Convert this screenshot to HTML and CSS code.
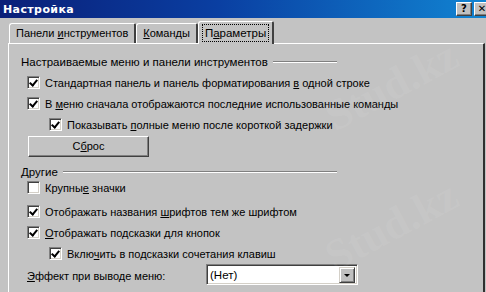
FILE: index.html
```html
<!DOCTYPE html>
<html lang="ru">
<head>
    <meta charset="UTF-8">
    <title>Настройка</title>
    <link rel="stylesheet" href="styles.css">
</head>
<body>
    <div class="dialog">
        <div class="titlebar">
            <span class="title">Настройка</span>
            <div class="caption-buttons">
                <span class="cap-btn">?</span>
                <span class="cap-btn">✕</span>
            </div>
        </div>

        <div class="tabs">
            <span class="tab">Панели <u>и</u>нструментов</span>
            <span class="tab"><u>К</u>оманды</span>
            <span class="tab active"><span class="focus">П<u>а</u>раметры</span></span>
        </div>

        <div class="panel">
            <div class="group-title"><span>Настраиваемые меню и панели инструментов</span><span class="rule"></span></div>

            <label class="check"><span class="box on"></span><span>Стандартная панель и панель форматирования <u>в</u> одной строке</span></label>
            <label class="check"><span class="box on"></span><span>В <u>м</u>еню сначала отображаются последние использованные команды</span></label>
            <label class="check sub"><span class="box on"></span><span>Показывать <u>п</u>олные меню после короткой задержки</span></label>

            <div class="btn-row"><span class="btn">С<u>б</u>рос</span></div>

            <div class="group-title second"><span>Другие</span><span class="rule"></span></div>

            <label class="check first"><span class="box"></span><span>Крупны<u>е</u> значки</span></label>
            <label class="check"><span class="box on"></span><span>Отображать названия <u>ш</u>рифтов тем же шрифтом</span></label>
            <label class="check"><span class="box on"></span><span><u>О</u>тображать подсказки для кнопок</span></label>
            <label class="check sub"><span class="box on"></span><span>Вклю<u>ч</u>ить в подсказки сочетания клавиш</span></label>

            <div class="effect-row">
                <span class="effect-label"><u>Э</u>ффект при выводе меню:</span>
                <div class="select">
                    <span class="select-value">(Нет)</span>
                    <span class="select-arrow"></span>
                </div>
            </div>
        </div>

        <span class="watermark wm-mid">Stud.kz</span>
        <span class="watermark wm-low">Stud.kz</span>
    </div>
</body>
</html>
```

FILE: styles.css
```css
* {
    margin: 0;
    padding: 0;
    box-sizing: border-box;
}
body {
    width: 486px;
    height: 292px;
    overflow: hidden;
    background: #c0c0c0;
    font-family: 'Liberation Sans', Arial, sans-serif;
    font-size: 11px;
    color: #000;
}
u {
    text-decoration: underline;
    text-underline-offset: 1px;
}
.dialog {
    position: relative;
    height: 292px;
    overflow: hidden;
    background: #c3c3c3;
}

/* Title bar */
.titlebar {
    height: 18px;
    display: flex;
    justify-content: space-between;
    align-items: center;
    padding-left: 3px;
    background: linear-gradient(to right, #0a1f78 0%, #0a3fa2 45%, #1184d2 100%);
}
.title {
    color: #fff;
    font-family: 'DejaVu Sans', sans-serif;
    font-weight: bold;
    font-size: 11px;
    letter-spacing: 0.4px;
}
.caption-buttons {
    display: flex;
    gap: 2px;
    margin-right: -4px;
}
.cap-btn {
    width: 16px;
    height: 14px;
    background: #c0c0c0;
    border: 1px solid;
    border-color: #fff #404040 #404040 #fff;
    box-shadow: inset -1px -1px 0 #808080;
    font-family: 'DejaVu Sans', sans-serif;
    font-weight: bold;
    font-size: 10px;
    line-height: 12px;
    text-align: center;
}

/* Tabs */
.tabs {
    display: flex;
    align-items: flex-end;
    height: 25px;
    padding-left: 9px;
}
.tab {
    height: 20px;
    padding: 0 6px 0 6px;
    line-height: 19px;
    font-size: 11px;
    border-top: 1px solid #fff;
    border-left: 1px solid #fff;
    border-right: 2px solid #404040;
    border-top-left-radius: 3px;
    border-top-right-radius: 2px;
    background: #c3c3c3;
}
.tab.active {
    height: 23px;
    margin-bottom: -1px;
    padding: 2px 3px 0 3px;
    font-size: 11.5px;
    position: relative;
    z-index: 1;
}
.focus {
    display: inline-block;
    padding: 0 2px;
    line-height: 16px;
    border: 1px dotted #000;
}

/* Panel */
.panel {
    margin-left: 8px;
    margin-right: 1px;
    height: 260px;
    border-top: 1px solid #fff;
    border-left: 1px solid #fff;
    border-right: 2px solid #303030;
    padding: 11px 0 0 12px;
    display: flex;
    flex-direction: column;
}
.group-title {
    display: flex;
    align-items: center;
    gap: 5px;
    width: 316px;
    height: 14px;
    font-size: 11.5px;
    white-space: nowrap;
    margin-bottom: 3px;
}
.group-title.second {
    margin-bottom: -2px;
}
.rule {
    flex: 1;
    height: 2px;
    border-top: 1px solid #808080;
    border-bottom: 1px solid #fff;
}
.check {
    display: flex;
    align-items: center;
    height: 21px;
    padding-left: 6px;
    font-size: 11px;
    white-space: nowrap;
}
.check.first {
    margin-bottom: 3px;
}
.check.sub {
    padding-left: 28px;
}
.box {
    flex: none;
    width: 13px;
    height: 13px;
    margin-right: 5px;
    background: #fff;
    border: 1px solid;
    border-color: #808080 #fff #fff #808080;
    box-shadow: inset 1px 1px 0 #404040, inset -1px -1px 0 #d4d0c8;
    position: relative;
}
.box.on::after {
    content: '';
    position: absolute;
    left: 3px;
    top: 1px;
    width: 3px;
    height: 6px;
    border: solid #000;
    border-width: 0 2px 2px 0;
    transform: rotate(40deg);
}
.btn-row {
    padding: 1px 0 8px 7px;
}
.btn {
    display: block;
    width: 121px;
    height: 21px;
    line-height: 18px;
    text-align: center;
    font-size: 11px;
    border: 1px solid;
    border-color: #fff #404040 #404040 #fff;
    box-shadow: inset -1px -1px 0 #808080;
}
.effect-row {
    display: flex;
    align-items: center;
    padding-left: 6px;
    height: 21px;
    font-size: 11px;
}
.effect-label {
    width: 179px;
    padding-top: 3px;
}
.select {
    width: 152px;
    height: 21px;
    display: flex;
    align-items: center;
    background: #fff;
    border: 1px solid;
    border-color: #808080 #fff #fff #808080;
    box-shadow: inset 1px 1px 0 #404040, inset -1px -1px 0 #d4d0c8;
    padding: 2px;
}
.select-value {
    flex: 1;
    padding-left: 1px;
    font-size: 11.5px;
}
.select-arrow {
    width: 16px;
    height: 16px;
    background: #c0c0c0;
    border: 1px solid;
    border-color: #d4d0c8 #404040 #404040 #d4d0c8;
    box-shadow: inset 1px 1px 0 #fff, inset -1px -1px 0 #808080;
    position: relative;
}
.select-arrow::after {
    content: '';
    position: absolute;
    left: 4px;
    top: 6px;
    border-left: 3px solid transparent;
    border-right: 3px solid transparent;
    border-top: 3px solid #000;
}

/* Faint site watermark over the screenshot */
.watermark {
    position: absolute;
    font-family: 'Liberation Serif', serif;
    font-weight: bold;
    font-size: 44px;
    color: rgba(255, 255, 255, 0.08);
    transform: rotate(-28deg);
    pointer-events: none;
    white-space: nowrap;
}
.wm-mid {
    left: 320px;
    top: 60px;
}
.wm-low {
    left: 320px;
    top: 200px;
}
```
